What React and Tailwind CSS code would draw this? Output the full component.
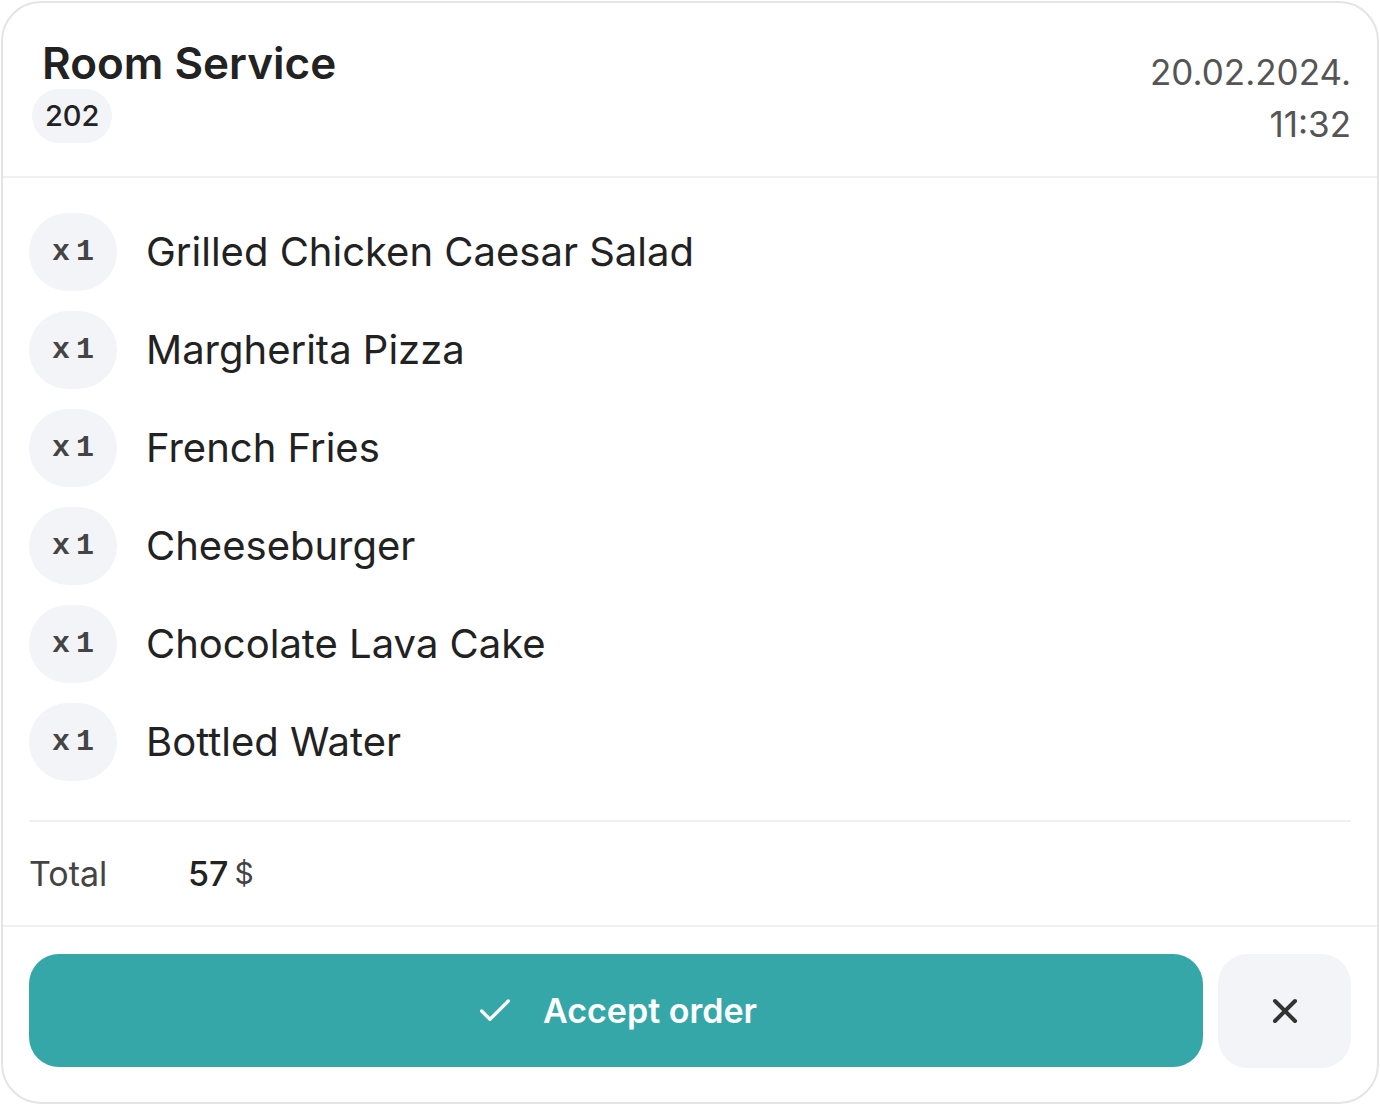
import { Check, X } from "lucide-react";

const items = [
  "Grilled Chicken Caesar Salad",
  "Margherita Pizza",
  "French Fries",
  "Cheeseburger",
  "Chocolate Lava Cake",
  "Bottled Water",
];

export default function App() {
  return (
    <div className="h-[1105px] w-[1380px] bg-white p-[1px] font-['Inter',sans-serif]">
      <div className="flex h-full flex-col rounded-[40px] border-2 border-[#e4e4e4] bg-white">
        {/* header */}
        <div className="flex items-start justify-between border-b-2 border-[#f0f0f0] pl-[29px] pr-[26px] pt-[34px] pb-[26px]">
          <div className="flex flex-col items-start">
            <h1 className="pl-[10px] text-[44px] font-semibold leading-[52px] text-[#222]">
              Room Service
            </h1>
            <span className="rounded-full bg-[#f2f4f7] px-[13px] py-[7px] text-[29px] font-medium leading-[40px] text-[#222]">
              202
            </span>
          </div>
          <div className="pt-[9px] text-right text-[35px] leading-[52px] text-[#555]">
            <div>20.02.2024.</div>
            <div>11:32</div>
          </div>
        </div>

        {/* items */}
        <div className="flex flex-col gap-[20px] px-[26px] pt-[35px]">
          {items.map((name) => (
            <div key={name} className="flex items-center gap-[29px]">
              <span className="flex h-[78px] w-[88px] items-center justify-center rounded-full bg-[#f2f4f7] font-mono text-[30px] font-bold tracking-[6px] text-[#444]">
                <span className="pl-[6px]">x1</span>
              </span>
              <span className="text-[40px] text-[#222]">{name}</span>
            </div>
          ))}
        </div>

        <div className="mx-[26px] mt-[39px] border-t-2 border-[#f0f0f0]" />

        {/* total */}
        <div className="flex items-center px-[26px] pt-[26px] pb-[26px]">
          <span className="w-[159px] text-[34px] text-[#444]">Total</span>
          <span className="text-[34px] font-medium text-[#222]">57</span>
          <span className="ml-[6px] text-[30px] text-[#444]">$</span>
        </div>

        <div className="border-t-2 border-[#f0f0f0]" />

        {/* actions */}
        <div className="flex gap-[15px] px-[26px] pt-[27px]">
          <button className="flex h-[113px] flex-1 items-center justify-center gap-[28px] rounded-[30px] bg-[#35a7a8] text-[34px] font-semibold text-white">
            <Check className="h-[40px] w-[40px]" strokeWidth={2} />
            Accept order
          </button>
          <button className="flex h-[114px] w-[133px] items-center justify-center rounded-[30px] bg-[#f2f4f7] text-[#333]">
            <X className="h-[40px] w-[40px]" strokeWidth={2.4} />
          </button>
        </div>
      </div>
    </div>
  );
}
